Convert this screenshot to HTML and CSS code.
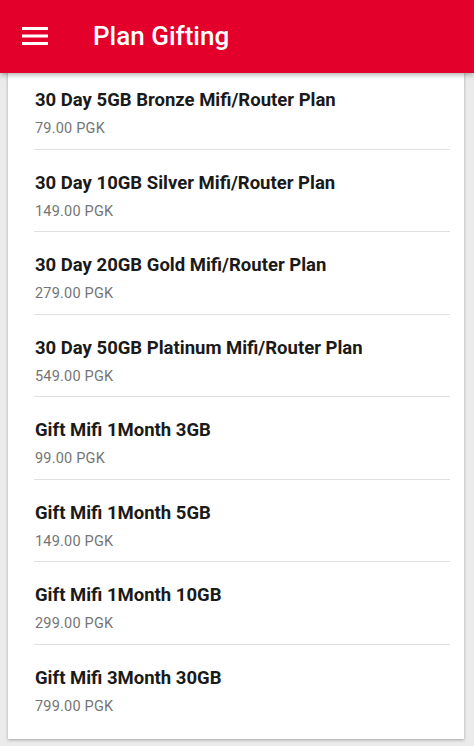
FILE: index.html
```html
<!DOCTYPE html>
<html>
<head>
<meta charset="utf-8">
<link rel="stylesheet" href="styles.css">
</head>
<body>
<header class="appbar">
  <svg class="menu" width="26" height="20" viewBox="0 0 26 20">
    <rect x="0" y="1" width="26" height="3" fill="#fff"/>
    <rect x="0" y="8.5" width="26" height="3" fill="#fff"/>
    <rect x="0" y="16" width="26" height="3" fill="#fff"/>
  </svg>
  <h1 class="title">Plan Gifting</h1>
</header>
<main class="card">
  <ul class="list">
    <li class="item"><div class="name">30 Day 5GB Bronze Mifi/Router Plan</div><div class="price">79.00 PGK</div></li>
    <li class="item"><div class="name">30 Day 10GB Silver Mifi/Router Plan</div><div class="price">149.00 PGK</div></li>
    <li class="item"><div class="name">30 Day 20GB Gold Mifi/Router Plan</div><div class="price">279.00 PGK</div></li>
    <li class="item"><div class="name">30 Day 50GB Platinum Mifi/Router Plan</div><div class="price">549.00 PGK</div></li>
    <li class="item"><div class="name">Gift Mifi 1Month 3GB</div><div class="price">99.00 PGK</div></li>
    <li class="item"><div class="name">Gift Mifi 1Month 5GB</div><div class="price">149.00 PGK</div></li>
    <li class="item"><div class="name">Gift Mifi 1Month 10GB</div><div class="price">299.00 PGK</div></li>
    <li class="item"><div class="name">Gift Mifi 3Month 30GB</div><div class="price">799.00 PGK</div></li>
  </ul>
</main>
</body>
</html>
```
FILE: styles.css
```css
html, body {
  margin: 0;
  padding: 0;
  background: #ebebeb;
  font-family: Roboto, "Liberation Sans", sans-serif;
  height: 746px;
  overflow: hidden;
}
.appbar {
  position: relative;
  z-index: 2;
  height: 73px;
  background: #e3002b;
  display: flex;
  align-items: center;
  box-shadow: 0 2px 5px rgba(0,0,0,0.3);
}
.menu {
  margin-left: 22px;
  margin-top: -2px;
}
.title {
  margin: 0 0 0 45px;
  color: #fff;
  font-size: 26px;
  font-weight: 500;
  line-height: 1;
  margin-top: -2px;
}
.card {
  position: relative;
  z-index: 1;
  margin: -6px 10px 0 8px;
  background: #fff;
  box-shadow: 0 1px 3px rgba(0,0,0,0.3);
  padding: 0 14px 13px 26px;
}
.list {
  list-style: none;
  margin: 0;
  padding: 0;
}
.item {
  padding: 21px 0 9.5px 1px;
  border-bottom: 1px solid #e0e0e0;
  height: 51px;
}
.item:last-child {
  border-bottom: none;
}
.name {
  font-size: 18.5px;
  font-weight: 700;
  color: #1a1a1a;
  line-height: 24px;
}
.price {
  margin-top: 7px;
  font-size: 14.5px;
  color: #757575;
  line-height: 20px;
  letter-spacing: 0.2px;
}
```
